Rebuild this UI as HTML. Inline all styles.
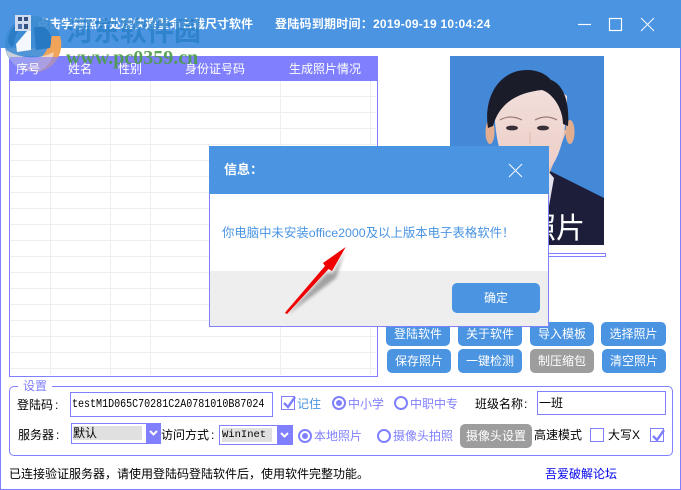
<!DOCTYPE html>
<html lang="zh"><head><meta charset="utf-8"><style>
html,body{margin:0;padding:0;width:681px;height:490px;overflow:hidden;background:#fff}
body{position:relative;font:12px "Liberation Sans","Noto Sans CJK SC",sans-serif;color:#000}
.a{position:absolute;white-space:nowrap}
.ln{position:absolute;background:#eeeeee}
.b{position:absolute;background:#4a94e2;color:#fff;border-radius:5px;text-align:center;font-size:12px;line-height:24px;height:24px;width:64px}
.g{background:#9d9d9d}
.p{color:#8080ff;font-size:12px}
.r{position:absolute;width:10px;height:10px;border:2px solid #8080ff;border-radius:50%;background:#fff;box-sizing:content-box}
.r.on::after{content:"";position:absolute;left:2px;top:2px;width:6px;height:6px;border-radius:50%;background:#8080ff}
.c{position:absolute;width:12px;height:12px;border:1px solid #8080ff;background:#fff}
</style></head><body>
<div class="a" style="left:0;top:0;width:681px;height:48px;background:#4a94e2"></div>
<div class="a" style="left:0;top:48px;width:1px;height:442px;background:#8080ff"></div>
<div class="a" style="left:680px;top:48px;width:1px;height:442px;background:#8080ff"></div>
<div class="a" style="left:0;top:489px;width:681px;height:1px;background:#8080ff"></div>

<!-- table -->
<div class="a" style="left:9px;top:56px;width:367px;height:319px;border:1px solid #8080ff;background:#fff"></div>
<div class="a" style="left:9px;top:56px;width:369px;height:25px;background:#8080ff"></div>
<div class="ln" style="left:50px;top:81px;width:1px;height:294px"></div>
<div class="ln" style="left:110px;top:81px;width:1px;height:294px"></div>
<div class="ln" style="left:150px;top:81px;width:1px;height:294px"></div>
<div class="ln" style="left:280px;top:81px;width:1px;height:294px"></div>
<div class="ln" style="left:370px;top:81px;width:1px;height:294px"></div>
<div class="ln" style="left:10px;top:96px;width:366px;height:1px"></div>
<div class="ln" style="left:10px;top:112px;width:366px;height:1px"></div>
<div class="ln" style="left:10px;top:128px;width:366px;height:1px"></div>
<div class="ln" style="left:10px;top:144px;width:366px;height:1px"></div>
<div class="ln" style="left:10px;top:160px;width:366px;height:1px"></div>
<div class="ln" style="left:10px;top:176px;width:366px;height:1px"></div>
<div class="ln" style="left:10px;top:192px;width:366px;height:1px"></div>
<div class="ln" style="left:10px;top:208px;width:366px;height:1px"></div>
<div class="ln" style="left:10px;top:224px;width:366px;height:1px"></div>
<div class="ln" style="left:10px;top:240px;width:366px;height:1px"></div>
<div class="ln" style="left:10px;top:256px;width:366px;height:1px"></div>
<div class="ln" style="left:10px;top:272px;width:366px;height:1px"></div>
<div class="ln" style="left:10px;top:288px;width:366px;height:1px"></div>
<div class="ln" style="left:10px;top:304px;width:366px;height:1px"></div>
<div class="ln" style="left:10px;top:320px;width:366px;height:1px"></div>
<div class="ln" style="left:10px;top:336px;width:366px;height:1px"></div>
<div class="ln" style="left:10px;top:352px;width:366px;height:1px"></div>
<div class="ln" style="left:10px;top:368px;width:366px;height:1px"></div>

<!-- logo + watermark -->
<div class="a" style="left:37px;top:14px;color:#fff;font-size:12px;font-weight:700;line-height:20px;width:215px">点击学籍照片处理快速重命名裁尺寸软件</div>
<svg class="a" style="left:0;top:0" width="210" height="72" viewBox="0 0 210 72">
<circle cx="33" cy="44" r="28" fill="#3d8bd2" opacity=".9"/>
<path d="M60 36A28 28 0 0 1 38 72Q30 72 22 69Q46 62 52 36Z" fill="#f0a45a"/>
<path d="M6 50A28 28 0 0 0 40 71Q52 64 54 52Q30 64 6 50Z" fill="#f3e2da" opacity=".75"/>
<path d="M8 42Q8 24 30 18Q16 28 14 44Q12 50 8 42Z" fill="#2a7cc4"/>
<path d="M16 44L27 31H31V50L17 52Z" fill="#f4f8fc"/>
<path d="M34 27H44Q54 33 50 48L36 50Z" fill="#2879c4"/>
<rect x="15" y="15" width="16" height="16" fill="#cfdcf0"/>
<rect x="18" y="17" width="4" height="4" fill="#33507f"/><rect x="24" y="17" width="4" height="4" fill="#33507f"/><rect x="18" y="24" width="4" height="5" fill="#4c6ea8"/><rect x="24" y="24" width="4" height="5" fill="#33507f"/>
</svg>
<div class="a" style="left:10px;top:57px;width:52px;height:16px;background:rgba(128,128,255,.62)"></div>
<div class="a" style="left:66px;top:13px;color:#2a80c8;font:700 27px 'Noto Sans CJK SC',sans-serif;line-height:34px;opacity:.82">河东软件园</div>
<div class="a" style="left:275px;top:14px;color:#fff;font-size:12px;font-weight:700;line-height:20px;letter-spacing:.25px">登陆码到期时间：2019-09-19 10:04:24</div>
<div class="a" style="left:66px;top:48px;color:#4a9c48;font:700 20px 'Liberation Serif',serif;line-height:20px;opacity:.9">www.pc0359.cn</div>
<div class="a" style="left:16px;top:61px;color:#fff;font-size:12px;line-height:16px">序号</div>
<div class="a" style="left:68px;top:61px;color:#fff;font-size:12px;line-height:16px">姓名</div>
<div class="a" style="left:118px;top:61px;color:#fff;font-size:12px;line-height:16px">性别</div>
<div class="a" style="left:185px;top:61px;color:#fff;font-size:12px;line-height:16px">身份证号码</div>
<div class="a" style="left:289px;top:61px;color:#fff;font-size:12px;line-height:16px">生成照片情况</div>

<!-- window buttons -->
<svg class="a" style="left:570px;top:12px" width="100" height="24" fill="none" stroke="#fff">
<path d="M8 12.5H21" stroke-width="1.2"/>
<rect x="39.5" y="6.5" width="12" height="12" stroke-width="1.2"/>
<path d="M71 6L84 19M84 6L71 19" stroke-width=".9"/>
</svg>

<!-- photo -->
<svg class="a" style="left:450px;top:56px" width="154" height="189" viewBox="0 0 154 189">
<defs><linearGradient id="sk" x1="0" y1="0" x2="0" y2="1"><stop offset="0" stop-color="#f2e0de"/><stop offset="1" stop-color="#ecccc4"/></linearGradient></defs>
<rect width="154" height="189" fill="#4488d8"/>
<path d="M0 189V170L50 130 70 112H92L98 114 154 142V189Z" fill="#1d1f3a"/>
<path d="M92 108L104 122 92 189H76L66 120Z" fill="#e4e2ee"/>
<path d="M58 90V124L78 146 100 116 117 74H58Z" fill="#e5bdae"/>
<ellipse cx="40" cy="76" rx="4.5" ry="12" fill="#e3ae90"/>
<ellipse cx="120" cy="76" rx="4.5" ry="12" fill="#e3ae90"/>
<path d="M44 40Q44 100 62 116Q78 130 96 116Q116 100 117 40Q80 10 44 40Z" fill="url(#sk)"/>
<path d="M38 72C33 40 50 14 77 14C88 14 96 18 101 24C113 28 120 46 118 70L113 68C113 54 104 38 92 34C72 36 50 44 43 70Z" fill="#1a1c2a"/>
<path d="M50 64Q60 58 72 64" stroke="#9a7872" stroke-width="1.2" fill="none"/>
<path d="M85 64Q96 58 107 64" stroke="#9a7872" stroke-width="1.2" fill="none"/>
<ellipse cx="62" cy="72" rx="6" ry="2.4" fill="#3a3038"/>
<ellipse cx="93" cy="72" rx="6" ry="2.4" fill="#3a3038"/>
<path d="M80 76V88" stroke="#e0b8ac" stroke-width="1" fill="none"/>
</svg>
<div class="a" style="left:527px;top:209px;color:#fff;font-size:29px;line-height:40px">照片</div>
<div class="a" style="left:450px;top:253px;width:154px;height:2px;border:1px solid #8080ff;background:#fff"></div>

<!-- buttons -->
<div class="b" style="left:386px;top:322px">登陆软件</div>
<div class="b" style="left:458px;top:322px">关于软件</div>
<div class="b" style="left:530px;top:322px">导入模板</div>
<div class="b" style="left:601px;top:322px;width:65px">选择照片</div>
<div class="b" style="left:387px;top:349px">保存照片</div>
<div class="b" style="left:458px;top:349px">一键检测</div>
<div class="b g" style="left:530px;top:349px">制压缩包</div>
<div class="b" style="left:602px;top:349px">清空照片</div>

<!-- settings -->
<div class="a" style="left:9px;top:386px;width:662px;height:68px;border:1px solid #8080ff;border-radius:5px"></div>
<div class="a" style="left:18px;top:378px;background:#fff;padding:0 5px;color:#8080ff;font-size:12px;line-height:16px">设置</div>
<div class="a" style="left:17px;top:396px;line-height:18px">登陆码<span style="margin-left:2px">:</span></div>
<div class="a" style="left:70px;top:392px;width:201px;height:23px;border:1px solid #8080ff;background:#fff"></div>
<div class="a" style="left:72px;top:392px;font:12px/25px 'Liberation Mono',monospace;transform:scaleX(.835);transform-origin:0 0">testM1D065C70281C2A0781010B87024</div>
<div class="c" style="left:281px;top:396px"></div>
<svg class="a" style="left:281px;top:394px" width="16" height="17"><path d="M3 9L7 13L14 3" stroke="#8080ff" stroke-width="2.4" fill="none"/></svg>
<div class="a" style="left:297px;top:395px;color:#4a94e2;line-height:18px">记住</div>
<div class="r on" style="left:332px;top:396px"></div>
<div class="a p" style="left:348px;top:395px;line-height:18px">中小学</div>
<div class="r" style="left:394px;top:396px"></div>
<div class="a p" style="left:410px;top:395px;line-height:18px">中职中专</div>
<div class="a" style="left:475px;top:395px;line-height:18px">班级名称<span style="margin-left:1px">:</span></div>
<div class="a" style="left:537px;top:391px;width:126px;height:22px;border:1px solid #8080ff;padding-left:1px;line-height:23px">一班</div>

<div class="a" style="left:18px;top:426px;line-height:18px">服务器<span style="margin-left:2px">:</span></div>
<div class="a" style="left:71px;top:423px;width:88px;height:19px;border:1px solid #8080ff"></div>
<div class="a" style="left:73px;top:426px;width:69px;height:14px;background:#e0e0e0;line-height:14px">默认</div>
<div class="a" style="left:146px;top:423px;width:15px;height:20px;background:#8080ff"></div>
<svg class="a" style="left:146px;top:423px" width="15" height="20"><path d="M4 8L7.5 11.5L11 8" stroke="#fff" stroke-width="2" fill="none"/></svg>
<div class="a" style="left:161px;top:426px;line-height:18px">访问方式<span style="margin-left:2px">:</span></div>
<div class="a" style="left:219px;top:425px;width:72px;height:18px;border:1px solid #8080ff"></div>
<div class="a" style="left:222px;top:428px;width:50px;height:14px;background:#e0e0e0;font:10.5px/15px 'Liberation Mono',monospace">WinInet</div>
<div class="a" style="left:277px;top:425px;width:15px;height:20px;background:#8080ff"></div>
<svg class="a" style="left:277px;top:425px" width="15" height="20"><path d="M4 8L7.5 11.5L11 8" stroke="#fff" stroke-width="2" fill="none"/></svg>
<div class="r on" style="left:298px;top:429px"></div>
<div class="a p" style="left:314px;top:427px;line-height:18px">本地照片</div>
<div class="r" style="left:377px;top:429px"></div>
<div class="a p" style="left:393px;top:427px;line-height:18px">摄像头拍照</div>
<div class="b g" style="left:460px;top:424px;width:72px">摄像头设置</div>
<div class="a" style="left:534px;top:426px;line-height:18px">高速模式</div>
<div class="c" style="left:590px;top:428px"></div>
<div class="a" style="left:608px;top:426px;line-height:18px">大写X</div>
<div class="c" style="left:650px;top:428px"></div>
<svg class="a" style="left:650px;top:426px" width="16" height="17"><path d="M3 10L7 14L14 4" stroke="#8080ff" stroke-width="2.4" fill="none"/></svg>

<div class="a" style="left:9px;top:465px;line-height:18px">已连接验证服务器，请使用登陆码登陆软件后，使用软件完整功能。</div>
<div class="a" style="left:545px;top:465px;color:#0000ee;line-height:18px">吾爱破解论坛</div>

<!-- dialog -->
<div class="a" style="left:209px;top:146px;width:338px;height:179px;border:1px solid #8080ff;background:#fff;box-sizing:content-box"></div>
<div class="a" style="left:209px;top:146px;width:340px;height:48px;background:#4a94e2"></div>
<div class="a" style="left:210px;top:271px;width:338px;height:55px;background:#eeeeee"></div>
<div class="a" style="left:224px;top:160px;color:#fff;font-size:13px;font-weight:700;line-height:20px">信息：</div>
<svg class="a" style="left:508px;top:163px" width="15" height="15"><path d="M1 1L14 14M14 1L1 14" stroke="#fff" stroke-width=".9" fill="none"/></svg>
<div class="a" style="left:222px;top:224px;color:#4a94e2;font-size:12.4px;line-height:18px">你电脑中未安装office2000及以上版本电子表格软件！</div>
<div class="a" style="left:452px;top:283px;width:88px;height:30px;border-radius:5px;background:#4a94e2;color:#fff;font-size:12px;line-height:30px;text-align:center">确定</div>
<svg class="a" style="left:280px;top:240px" width="72" height="78" viewBox="0 0 72 78">
<defs><filter id="bl" x="-20%" y="-20%" width="140%" height="140%"><feGaussianBlur stdDeviation="1.5"/></filter></defs>
<path d="M7 75L47 33 53 33 65 10 56 38Z" fill="#444" opacity=".45" filter="url(#bl)"/>
<path d="M5 73L6 71.5L45 26 43 23 65.7 7 52 31 48.5 29 7 74Z" fill="#f00000"/>
</svg>
</body></html>
